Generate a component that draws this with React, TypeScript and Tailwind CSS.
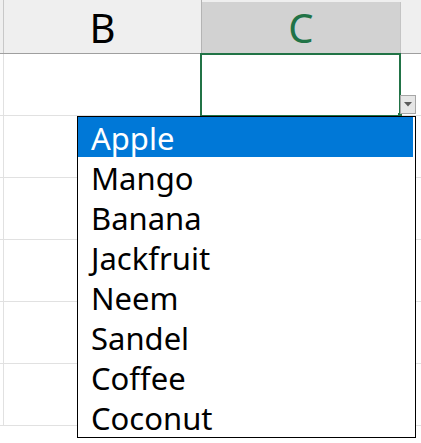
const FRUITS = ["Apple", "Mango", "Banana", "Jackfruit", "Neem", "Sandel", "Coffee", "Coconut"];

const ROWS = 6;

export default function App() {
    return (
        <div
            className="relative w-[421px] h-[443px] overflow-hidden bg-white"
            style={{ fontFamily: '"Noto Sans", "Open Sans", sans-serif' }}
        >
            {/* Column headers */}
            <div className="flex h-[54px] bg-[#efefef] border-b border-[#9f9f9f]">
                <div className="w-[4px] border-r border-[#c8c8c8]" />
                <div className="w-[198px] border-r border-[#b4b4b4] flex items-center justify-center pt-[2px] text-[40px] leading-none text-black">
                    B
                </div>
                <div className="w-[199px] mt-[2px] bg-[#d2d2d2] border-r border-[#c4c4c4] flex items-center justify-center text-[40px] leading-none text-[#217346]">
                    C
                </div>
                <div className="flex-1" />
            </div>

            {/* Grid rows */}
            {Array.from({ length: ROWS }).map((_, i) => (
                <div key={i} className="flex h-[62px] border-b border-[#e1e1e1]">
                    <div className="w-[4px] border-r border-[#e1e1e1]" />
                    <div className="w-[198px] border-r border-[#e1e1e1]" />
                    <div className="w-[199px] border-r border-[#e1e1e1]" />
                    <div className="flex-1" />
                </div>
            ))}

            {/* Selected cell C1 */}
            <div className="absolute left-[200px] top-[53px] w-[201px] h-[64px] border-2 border-[#217346]" />
            <div className="absolute left-[398px] top-[113px] w-[4px] h-[4px] bg-[#217346]" />

            {/* Dropdown arrow button */}
            <div className="absolute left-[400px] top-[95px] w-[16px] h-[19px] bg-[#e6e6e6] border border-[#a6a6a6] flex items-center justify-center">
                <svg width="8" height="5" viewBox="0 0 8 5">
                    <path d="M0 0 H8 L4 4.5 Z" fill="#5a5a5a" />
                </svg>
            </div>

            {/* Dropdown list */}
            <div className="absolute left-[77px] top-[116px] w-[339px] h-[322px] bg-white border border-black pr-[2px]">
                {FRUITS.map((f, i) => (
                    <div
                        key={f}
                        className={`h-[40px] pl-[13px] pt-[2px] text-[31px] leading-[38px] ${
                            i === 0 ? "bg-[#0078d7] text-white" : "text-black"
                        }`}
                    >
                        {f}
                    </div>
                ))}
            </div>
        </div>
    );
}
